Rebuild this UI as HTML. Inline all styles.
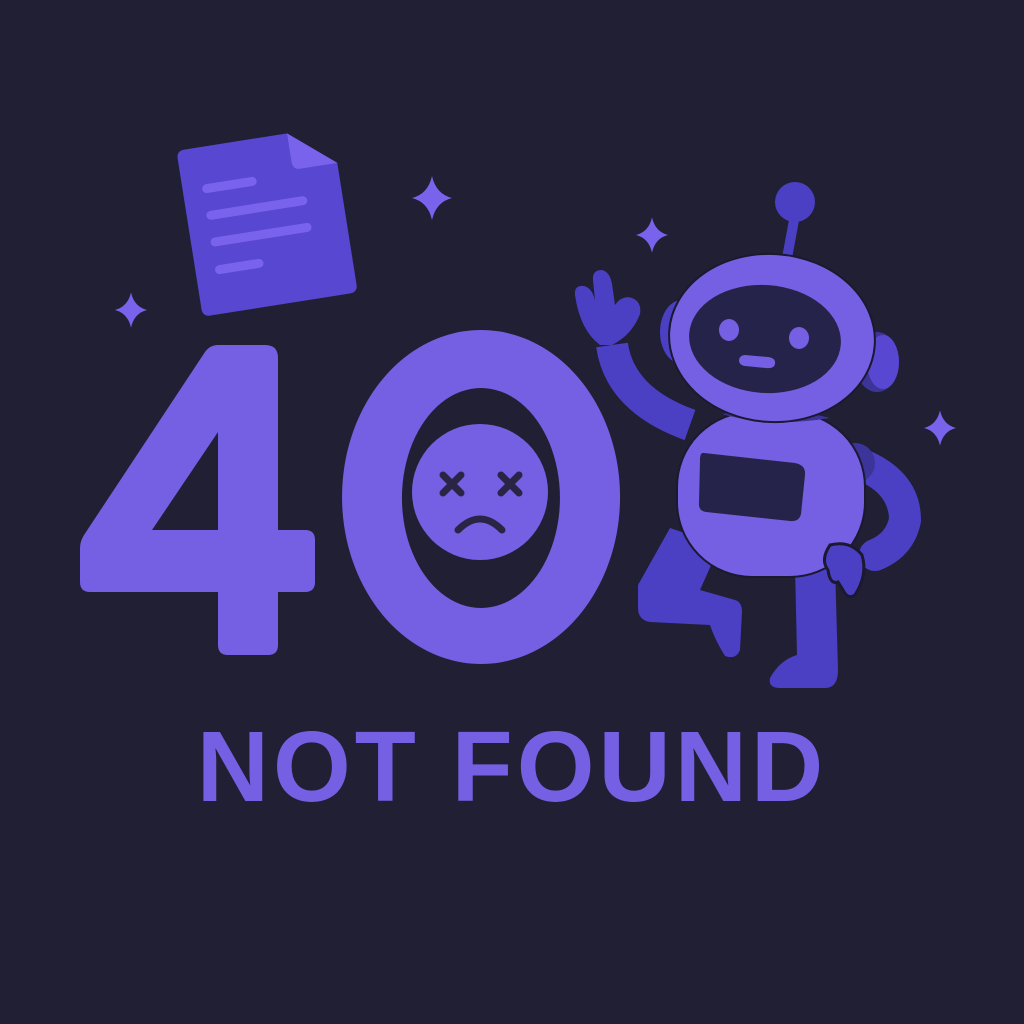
<!DOCTYPE html>
<html><head><meta charset="utf-8"><style>
html,body{margin:0;padding:0;background:#211f33;width:1024px;height:1024px;overflow:hidden}
svg{position:absolute;left:0;top:0}
.t{position:absolute;left:0;width:1024px;top:712px;text-align:center;font-family:"Liberation Sans",sans-serif;font-weight:bold;font-size:100px;color:#7560e3;letter-spacing:4px;line-height:110px}
</style></head><body>
<svg width="1024" height="1024" viewBox="0 0 1024 1024">
<defs><g id="sp"><path d="M0,-22 Q4,-4 20,0 Q4,4 0,22 Q-4,4 -20,0 Q-4,-4 0,-22Z"/></g></defs>
<g fill="#7a63ec">
<use href="#sp" transform="translate(432,198)"/>
<use href="#sp" transform="translate(652,235) scale(0.8)"/>
<use href="#sp" transform="translate(131,310) scale(0.8)"/>
<use href="#sp" transform="translate(940,428) scale(0.8)"/>
</g>
<g transform="rotate(-9 264 218)">
<path d="M196,138 H300 L345,175 V298 Q345,306 337,306 H196 Q188,306 188,298 V146 Q188,138 196,138Z" fill="#5747d1"/>
<path d="M300,138 L345,175 H308 Q300,175 300,167Z" fill="#7a63ec"/>
<g stroke="#7a63ec" stroke-width="9" stroke-linecap="round">
<line x1="212" y1="180" x2="258" y2="180"/><line x1="212" y1="207" x2="305" y2="207"/>
<line x1="212" y1="234" x2="305" y2="234"/><line x1="212" y1="262" x2="252" y2="262"/></g>
</g>
<path fill-rule="evenodd" fill="#7560e3" d="M218,345 H265 Q278,345 278,358 V530 H305 Q315,530 315,540 V582 Q315,592 305,592 H278 V645 Q278,655 268,655 H228 Q218,655 218,645 V592 H90 Q80,592 80,582 V548 Q80,540 86,532 L205,352 Q210,345 218,345Z M152,530 H218 V432Z"/>
<path fill-rule="evenodd" fill="#7560e3" d="M481,330 A139,167 0 1 0 481.1,330Z M481,388 A79,110 0 1 1 480.9,388Z"/>
<circle cx="480" cy="492" r="68" fill="#7560e3"/>
<g stroke="#2a2545" stroke-width="7" stroke-linecap="round" fill="none">
<path d="M443,475 L461,493 M461,475 L443,493 M501,475 L519,493 M519,475 L501,493"/>
<path d="M458,530 Q480,508 502,530"/></g>
<path fill="#4b3fc4" d="M670,528 L720,545 L700,590 L735,600 Q742,602 742,612 L740,650 Q736,660 725,656 Q715,640 710,625 L650,622 Q638,620 638,608 V585Z"/>
<path fill="#4b3fc4" d="M795,565 H835 L838,670 Q838,688 825,688 H780 Q768,688 770,678 Q780,660 797,655Z"/>
<path d="M612,345 Q620,400 690,425" stroke="#4b3fc4" stroke-width="32" fill="none" stroke-linecap="butt"/>
<path fill="#4b3fc4" d="M600,345 Q580,330 575,295 Q574,285 584,286 Q592,288 595,300 L593,280 Q592,270 602,270 Q610,272 612,284 L615,305 Q622,295 632,298 Q642,302 640,314 Q632,335 612,345Z"/>
<path d="M855,462 Q905,480 905,520 Q900,545 875,555" stroke="#4b3fc4" stroke-width="32" fill="none" stroke-linecap="round"/>
<circle cx="855" cy="463" r="20" fill="#3d3499"/>
<rect x="677" y="412" width="188" height="165" rx="75" fill="#7560e3" stroke="#1b1930" stroke-width="2"/>
<path d="M722,414 Q770,428 830,418 Q800,410 760,410Z" fill="#3d3499"/>
<path d="M704,453 L795,463 Q806,465 805,475 L801,514 Q799,522 790,521 L706,512 Q698,511 699,502 L700,460 Q700,452 704,453Z" fill="#26234a"/>
<path fill="#4b3fc4" stroke="#1b1930" stroke-width="3" d="M830,545 Q850,540 862,555 Q868,575 855,595 Q848,600 843,590 L838,582 Q830,585 828,570 Q820,560 830,545Z"/>
<ellipse cx="682" cy="332" rx="22" ry="32" fill="#4b3fc4"/>
<line x1="795" y1="215" x2="787" y2="258" stroke="#4b3fc4" stroke-width="10"/>
<circle cx="795" cy="202" r="20" fill="#4b3fc4"/>
<ellipse cx="877" cy="362" rx="22" ry="30" fill="#3d3499"/>
<ellipse cx="883" cy="362" rx="16" ry="27" fill="#5747d1"/>
<ellipse cx="772" cy="338" rx="103" ry="84" fill="#7560e3" stroke="#1b1930" stroke-width="2" transform="rotate(4 772 338)"/>
<ellipse cx="765" cy="339" rx="76" ry="54" fill="#26234a" transform="rotate(4 765 339)"/>
<ellipse cx="729" cy="330" rx="10" ry="11" fill="#7560e3"/>
<ellipse cx="799" cy="338" rx="10" ry="11" fill="#7560e3"/>
<path d="M745,355 L768,357 Q776,358 775,364 Q774,369 766,368 L745,366 Q739,365 739,360 Q740,355 745,355Z" fill="#7560e3"/>
</svg>
<div class="t">NOT FOUND</div>
</body></html>
